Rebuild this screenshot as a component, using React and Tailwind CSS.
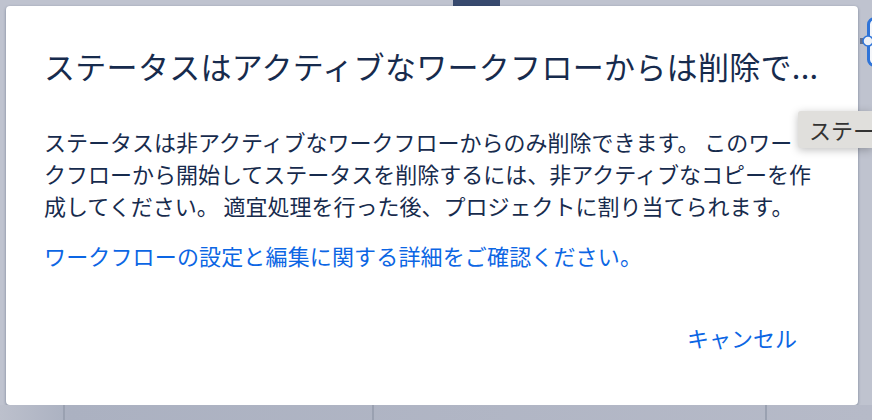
import React from "react";

const App = () => {
  return (
    <div className="relative w-[872px] h-[420px] overflow-hidden flex flex-col bg-[#bfc3cf] font-['Noto_Sans_CJK_JP','Noto_Sans',sans-serif] text-[#172b4d]">
      {/* Board behind the overlay */}
      <div className="h-[6px] shrink-0 flex justify-center">
        <div className="ml-[81px] w-[47px] bg-[#384a6e]" />
      </div>

      <div className="flex h-[399px] shrink-0">
        <div className="w-[6px] shrink-0" />
        {/* Dialog */}
        <div className="w-[852px] flex flex-col bg-white rounded-[4px] shadow-[0_1px_3px_rgba(9,30,66,0.4)]">
          <div className="pl-[38px] pr-[30px] pt-[37px]">
            <h1 className="text-[31px] tracking-[0.3px] leading-[46px] font-normal whitespace-nowrap">
              ステータスはアクティブなワークフローからは削除で...
            </h1>
          </div>
          <div className="pl-[38px] pr-[44px] pt-[36px] text-[22px] leading-[32px]">
            <p>
              ステータスは非アクティブなワークフローからのみ削除できます。 このワークフローから開始してステータスを削除するには、非アクティブなコピーを作成してください。 適宜処理を行った後、プロジェクトに割り当てられます。
            </p>
            <p className="mt-[18px]">
              <a className="text-[#0c66e4] tracking-[0.15px]" href="#">
                ワークフローの設定と編集に関する詳細をご確認ください。
              </a>
            </p>
          </div>
          <div className="mt-auto flex justify-end pr-[61px] pb-[52px]">
            <button className="text-[22px] leading-[32px] text-[#0c66e4]">キャンセル</button>
          </div>
        </div>
      </div>

      {/* Column dividers under the dialog */}
      <div className="flex-1 pl-[63px] flex bg-linear-to-r from-[#bcc0cc] via-[#abb1c1] via-[8%] to-[#b6bac8]">
        <div className="w-[309px] border-l-2 border-[#9aa1b1]" />
        <div className="w-[393px] border-l-2 border-[#9aa1b1]" />
        <div className="flex-1 border-l-2 border-[#9aa1b1]" />
      </div>

      {/* Status node clipped at the right edge */}
      <svg className="absolute right-0 top-[14px]" width="14" height="58" viewBox="0 0 14 58" fill="none">
        <rect x="10.5" y="4.5" width="20" height="47" rx="6" fill="#f4f6fa" stroke="#2f74d8" strokeWidth="3" />
        <rect x="2" y="24" width="5" height="6" fill="#5f6f8f" />
        <circle cx="10" cy="27" r="5" fill="#eef1f6" stroke="#2f74d8" strokeWidth="1.5" />
      </svg>

      {/* Tooltip */}
      <div className="absolute right-0 top-[111px] w-[74px] h-[37px] pl-[11px] flex items-center overflow-hidden bg-[#e0dfdc] rounded-l-[3px] shadow-[0_2px_8px_rgba(0,0,0,0.25)] text-[22px] text-[#333] whitespace-nowrap">
        ステー
      </div>
    </div>
  );
};

export default App;
